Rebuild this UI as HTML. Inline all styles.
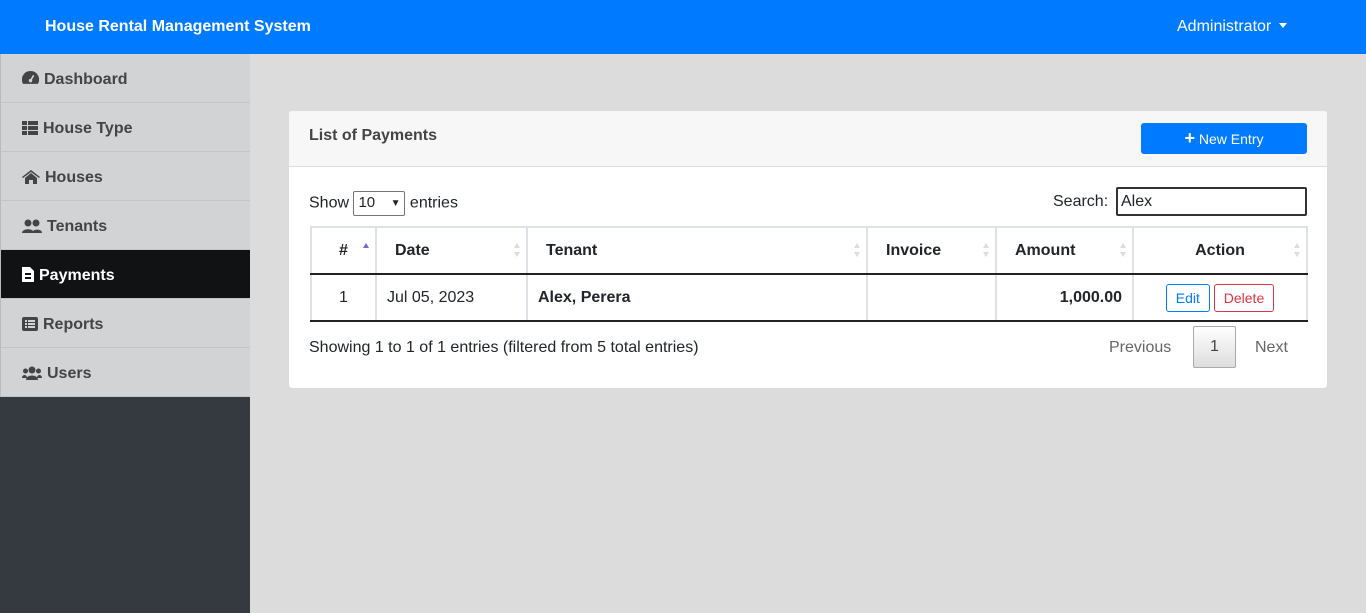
<!DOCTYPE html>
<html><head><style>
*{box-sizing:border-box;margin:0;padding:0}
body{width:1366px;height:613px;overflow:hidden;background:#dcdcdc;font-family:"Liberation Sans",sans-serif;font-size:16px;color:#212529;position:relative}
.nav{position:absolute;left:0;top:0;width:1366px;height:54px;background:#007bff;color:#fff}
.brand{position:absolute;left:45px;top:18px;font-weight:bold;font-size:16px}
.admin{position:absolute;left:1177px;top:18px;font-size:16px}
.admin:after{content:"";display:inline-block;margin-left:8px;vertical-align:3px;border-top:5px solid #fff;border-left:4px solid transparent;border-right:4px solid transparent}
.side{position:absolute;left:0;top:54px;width:250px;height:559px;background:#343a40}
.item{position:absolute;left:0;width:250px;height:49px;background:#d2d3d5;border-left:1px solid #bbb;border-bottom:1px solid #c4c4c6;color:#444;font-weight:bold;font-size:16px;padding:17px 0 0 21px}
.item.act{background:#111214;color:#fff}
.item svg{vertical-align:-2px;margin-right:5px}
.card{position:absolute;left:289px;top:111px;width:1038px;height:277px;background:#fff;border-radius:3px}
.ch{position:absolute;left:0;top:0;width:1038px;height:56px;background:#f7f7f7;border-bottom:1px solid #ddd;border-radius:3px 3px 0 0}
.ct{position:absolute;left:20px;top:16px;font-weight:bold;color:#444}
.btn{position:absolute;left:852px;top:12px;width:166px;height:31px;background:#007bff;color:#fff;border-radius:3px;text-align:center;font-size:14px;line-height:31px}
.abs{position:absolute}
table{position:absolute;left:21px;top:115px;width:998px;border-collapse:collapse}
th,td{border:2px solid #dee2e6;height:47px}
th{border-bottom:2px solid #222;font-weight:bold;text-align:left;padding-left:18px;position:relative}
td{border-bottom:2px solid #222;border-top:none}
th:after{content:"";position:absolute;right:6px;top:15px;border-bottom:5px solid #ddd;border-left:3px solid transparent;border-right:3px solid transparent}
th:before{content:"";position:absolute;right:6px;top:24px;border-top:5px solid #ddd;border-left:3px solid transparent;border-right:3px solid transparent}
th.s:after{border-bottom-color:#6a6adf}th.s:before{display:none}
</style></head><body>
<div class="nav"><div class="brand">House Rental Management System</div><div class="admin">Administrator</div></div>
<div class="side">
<div class="item" style="top:0"><svg width="17" height="15" viewBox="0 0 16 14"><path d="M8 0a8 8 0 0 0-7 12h14A8 8 0 0 0 8 0z" fill="#444"/><circle cx="8" cy="9" r="1.6" fill="#d2d3d5"/><path d="M8 9L11 4" stroke="#d2d3d5" stroke-width="1.5"/></svg>Dashboard</div>
<div class="item" style="top:49px"><svg width="16" height="14"><rect width="5" height="4" fill="#444"/><rect x="6" width="10" height="4" fill="#444"/><rect y="5" width="5" height="4" fill="#444"/><rect x="6" y="5" width="10" height="4" fill="#444"/><rect y="10" width="5" height="4" fill="#444"/><rect x="6" y="10" width="10" height="4" fill="#444"/></svg>House Type</div>
<div class="item" style="top:98px"><svg width="18" height="14"><path d="M9 0L0 7l1 1 8-6 8 6 1-1zM3 8v6h4v-4h4v4h4V8L9 3z" fill="#444"/></svg>Houses</div>
<div class="item" style="top:147px"><svg width="20" height="14"><circle cx="6" cy="4" r="3.5" fill="#444"/><circle cx="14" cy="4" r="3.5" fill="#444"/><path d="M0 14c0-5 12-5 12 0zM10 14c0-4 10-5 10 0z" fill="#444"/></svg>Tenants</div>
<div class="item act" style="top:196px"><svg width="12" height="15"><path d="M0 0h8l4 4v11H0z" fill="#fff"/><rect x="3" y="6" width="6" height="2" fill="#111"/><rect x="3" y="10" width="6" height="2" fill="#111"/></svg>Payments</div>
<div class="item" style="top:245px"><svg width="16" height="14"><rect width="16" height="14" rx="2" fill="#444"/><rect x="3" y="3" width="2" height="2" fill="#d2d3d5"/><rect x="6" y="3" width="7" height="2" fill="#d2d3d5"/><rect x="3" y="6" width="2" height="2" fill="#d2d3d5"/><rect x="6" y="6" width="7" height="2" fill="#d2d3d5"/><rect x="3" y="9" width="2" height="2" fill="#d2d3d5"/><rect x="6" y="9" width="7" height="2" fill="#d2d3d5"/></svg>Reports</div>
<div class="item" style="top:294px"><svg width="20" height="14"><circle cx="10" cy="4" r="3.5" fill="#444"/><circle cx="3.5" cy="5" r="2.5" fill="#444"/><circle cx="16.5" cy="5" r="2.5" fill="#444"/><path d="M4 14c0-6 12-6 12 0zM0 12c0-4 5-4 5 0zM15 12c0-4 5-4 5 0z" fill="#444"/></svg>Users</div>
</div>
<div class="card">
<div class="ch"><div class="ct">List of Payments</div><div class="btn"><b style="font-size:18px">+</b> New Entry</div></div>
<div class="abs" style="left:20px;top:80px">Show <span style="display:inline-block;width:52px;height:25px;border:1px solid #767676;border-radius:2px;vertical-align:middle;padding:2px 4px;font-size:15px">10<span style="float:right;font-size:10px;margin-top:4px">▼</span></span> entries</div>
<div class="abs" style="left:764px;top:82px">Search:</div>
<div class="abs" style="left:827px;top:76px;width:191px;height:29px;border:2px solid #333;border-radius:2px;padding:4px 3px">Alex</div>
<table>
<tr><th class="s" style="width:65px;text-align:center;padding:0">#</th><th style="width:151px">Date</th><th style="width:340px">Tenant</th><th style="width:129px">Invoice</th><th style="width:137px">Amount</th><th style="text-align:center;padding:0">Action</th></tr>
<tr><td style="text-align:center">1</td><td style="padding-left:10px">Jul 05, 2023</td><td style="padding-left:10px;font-weight:bold">Alex, Perera</td><td></td><td style="text-align:right;padding-right:10px;font-weight:bold">1,000.00</td><td style="text-align:center;font-size:14px"><span style="display:inline-block;border:1px solid #007bff;color:#007bff;border-radius:3px;padding:5px 9px">Edit</span> <span style="display:inline-block;border:1px solid #dc3545;color:#dc3545;border-radius:3px;padding:5px 9px">Delete</span></td></tr>
</table>
<div class="abs" style="left:20px;top:228px">Showing 1 to 1 of 1 entries (filtered from 5 total entries)</div>
<div class="abs" style="left:820px;top:228px;color:#666">Previous</div>
<div class="abs" style="left:904px;top:215px;width:43px;height:42px;border:1px solid #aaa;border-radius:2px;background:linear-gradient(#fff,#ddd);text-align:center;line-height:40px;color:#444">1</div>
<div class="abs" style="left:966px;top:228px;color:#666">Next</div>
</div>
</body></html>
